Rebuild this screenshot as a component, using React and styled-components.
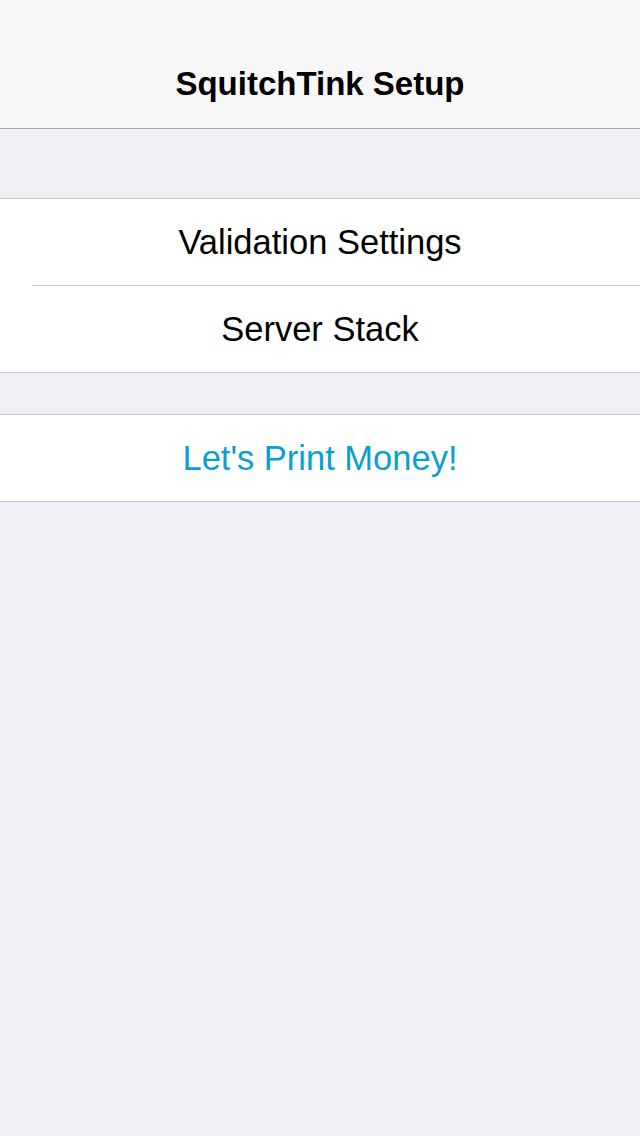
import styled, { createGlobalStyle } from "styled-components";

const GlobalStyle = createGlobalStyle`
  html, body {
    margin: 0;
    padding: 0;
    background: #efeff4;
    font-family: "Liberation Sans", Arial, sans-serif;
  }
`;

const Screen = styled.div`
  min-height: 1136px;
  background: #efeff4;
  display: flex;
  flex-direction: column;
`;

const NavBar = styled.header`
  height: 129px;
  box-sizing: border-box;
  padding-top: 40px;
  background: #f7f7f7;
  border-bottom: 1px solid #a7a7aa;
  display: flex;
  align-items: center;
  justify-content: center;
`;

const NavTitle = styled.h1`
  margin: 0;
  font-size: 33px;
  font-weight: bold;
  color: #000;
`;

const Group = styled.section`
  margin-top: ${props => props.gap}px;
  background: #fff;
  border-top: 1px solid #c8c7cc;
  border-bottom: 1px solid #c8c7cc;
`;

const Row = styled.div`
  height: 86px;
  display: flex;
  align-items: center;
  justify-content: center;
  font-size: 34.5px;
  color: ${props => props.accent ? "#0a9fd0" : "#000"};

  & + & {
    border-top: 1px solid #c8c7cc;
    margin-left: 32px;
    padding-right: 32px;
  }
`;

export default function App() {
  return (
    <Screen>
      <GlobalStyle />
      <NavBar>
        <NavTitle>SquitchTink Setup</NavTitle>
      </NavBar>
      <Group gap={69}>
        <Row>Validation Settings</Row>
        <Row>Server Stack</Row>
      </Group>
      <Group gap={41}>
        <Row accent>Let's Print Money!</Row>
      </Group>
    </Screen>
  );
}
